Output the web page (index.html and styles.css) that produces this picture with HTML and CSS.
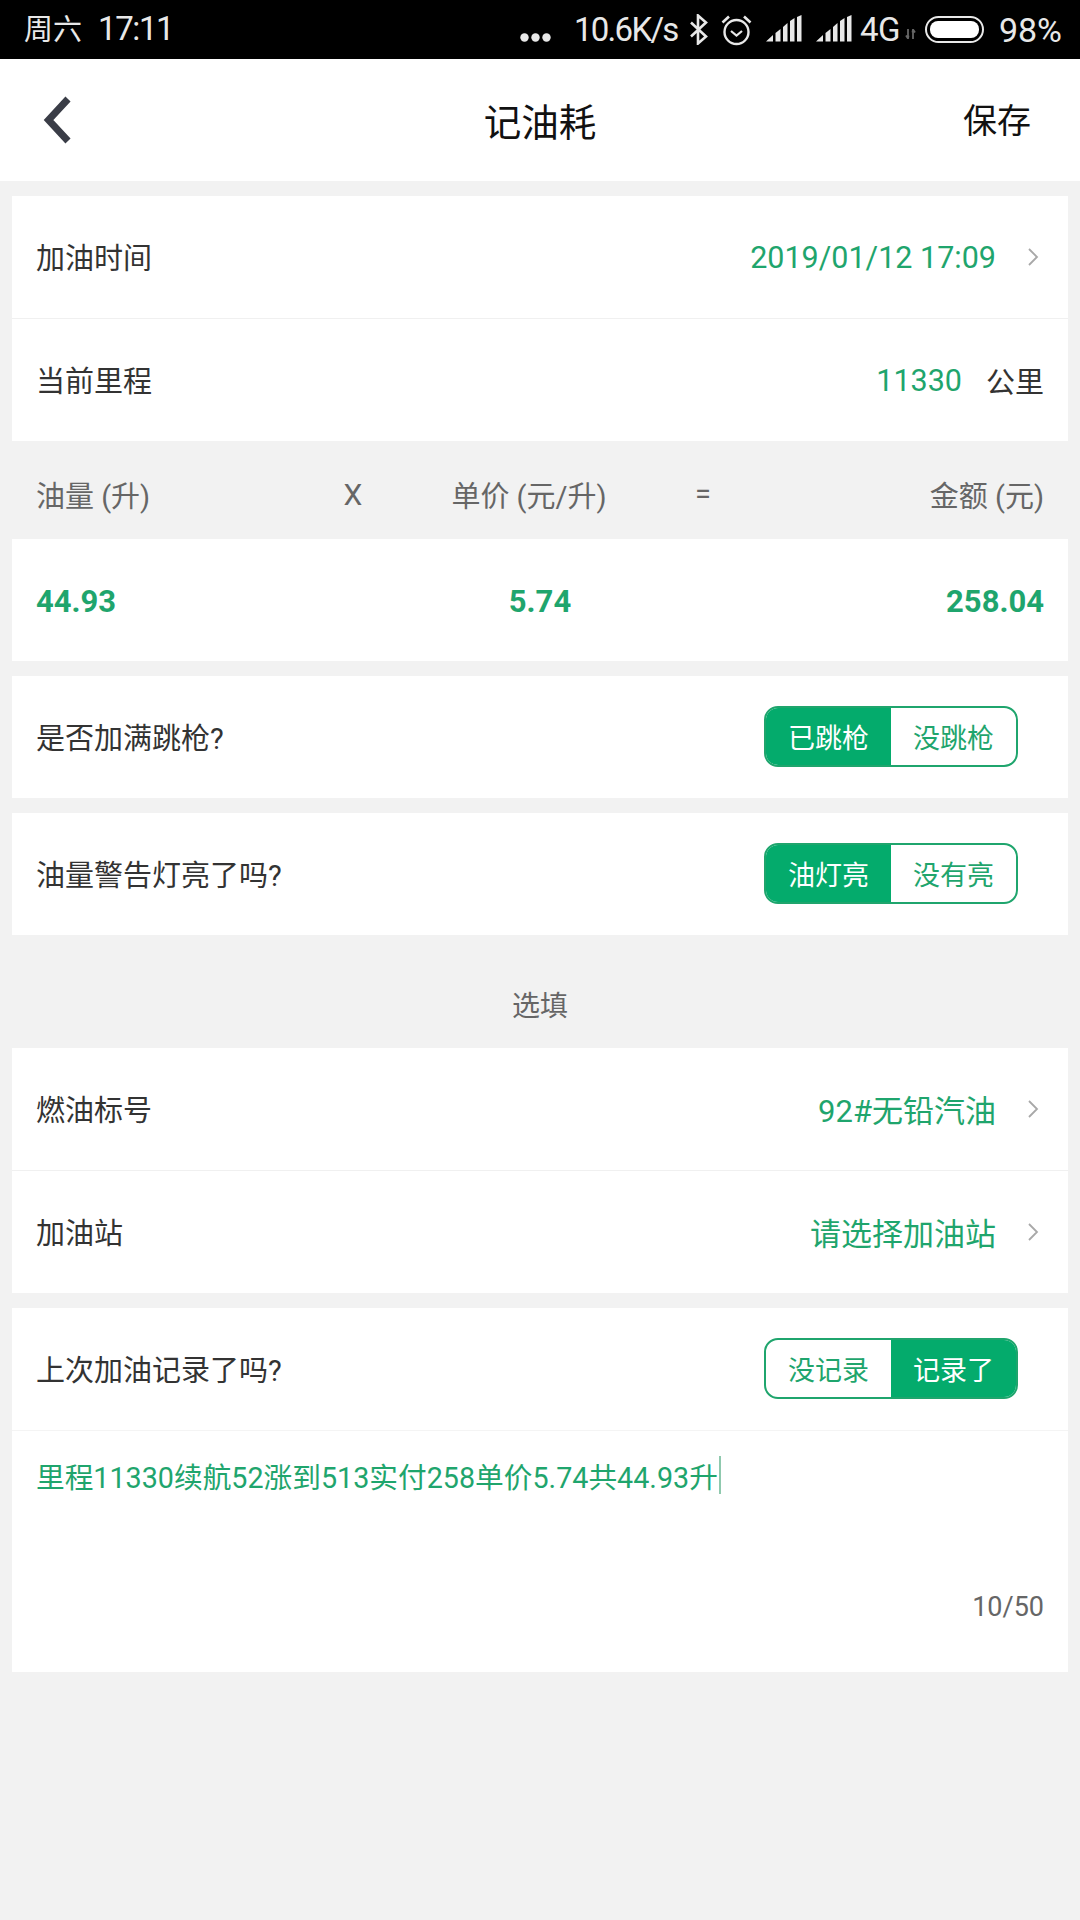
FILE: index.html
```html
<!DOCTYPE html>
<html lang="zh">
<head>
<meta charset="utf-8">
<title>记油耗</title>
<link rel="stylesheet" href="styles.css">
</head>
<body>
<div class="status">
  <div class="st-left"><span class="st-day">周六</span><span class="st-time">17:11</span></div>
  <div class="st-right">
    <svg class="i-dots" width="31" height="9" viewBox="0 0 31 9"><circle cx="4.500" cy="4.500" r="4.200"/><circle cx="15.500" cy="4.500" r="4.200"/><circle cx="26.500" cy="4.500" r="4.200"/></svg>
    <span class="st-speed">10.6K/s</span>
    <svg class="i-bt" width="19" height="31" viewBox="0 0 19 31"><path d="M2 8.500l15 14-8 7V1.500l8 7-15 14" fill="none" stroke="#e8e8e8" stroke-width="2.600"/></svg>
    <svg class="i-alarm" width="31" height="32" viewBox="0 0 31 32"><circle cx="15.500" cy="18" r="12" fill="none" stroke="#e8e8e8" stroke-width="2.400"/><path d="M10 17l5.500 4.500L21 17" fill="none" stroke="#e8e8e8" stroke-width="2.200"/><path d="M1.500 8.500 8 2.500M29.500 8.500 23 2.500" fill="none" stroke="#e8e8e8" stroke-width="2.600"/></svg>
    <svg class="i-sig" width="36" height="27" viewBox="0 0 36 27"><path d="M0 26.500 7 20v6.500zM9.500 18l5-4v12.500h-5zM17 12l4.500-4v18.500H17zM24 6l4.500-3v23.500H24zM31 2l4.500-2v26.500H31z" fill="#e8e8e8"/></svg>
    <svg class="i-sig i-sig2" width="36" height="27" viewBox="0 0 36 27"><path d="M0 26.500 7 20v6.500zM9.500 18l5-4v12.500h-5zM17 12l4.500-4v18.500H17zM24 6l4.500-3v23.500H24zM31 2l4.500-2v26.500H31z" fill="#e8e8e8"/></svg>
    <span class="st-4g">4G</span>
    <svg class="i-arrows" width="11" height="10" viewBox="0 0 11 10"><path d="M3 0v9M1 6.500 3 9.500 3.500 6.500M8 10V1M7.500 3.500 8 .5 10 3.500" fill="none" stroke="#666" stroke-width="1.800"/></svg>
    <div class="battery"><div class="battery-fill"></div></div>
    <span class="st-pct">98%</span>
  </div>
</div>

<header class="nav">
  <svg class="back" width="30" height="48" viewBox="0 0 30 48"><path d="M26 3 6.500 24 26 45" fill="none" stroke="#3a3d47" stroke-width="7"/></svg>
  <h1 class="nav-title">记油耗</h1>
  <span class="nav-save">保存</span>
</header>

<main class="page">
  <section class="card">
    <div class="row line">
      <span class="label">加油时间</span>
      <div class="value"><span class="green">2019/01/12 17:09</span>
        <svg class="chev" width="12" height="20" viewBox="0 0 12 20"><path d="M2 2l8 8-8 8" fill="none" stroke="#a8a8a8" stroke-width="1.800"/></svg></div>
    </div>
    <div class="row">
      <span class="label">当前里程</span>
      <div class="value"><span class="green">11330</span><span class="unit">公里</span></div>
    </div>
  </section>

  <div class="calc-head">
    <span>油量 (升)</span><span class="c-mid c-x">X</span><span class="c-mid">单价 (元/升)</span><span class="c-mid">=</span><span class="c-end">金额 (元)</span>
  </div>
  <section class="card calc">
    <span class="num">44.93</span><span class="num mid">5.74</span><span class="num">258.04</span>
  </section>

  <section class="card gap">
    <div class="row">
      <span class="label">是否加满跳枪?</span>
      <div class="seg"><span class="on">已跳枪</span><span>没跳枪</span></div>
    </div>
  </section>
  <section class="card gap">
    <div class="row">
      <span class="label">油量警告灯亮了吗?</span>
      <div class="seg"><span class="on">油灯亮</span><span>没有亮</span></div>
    </div>
  </section>

  <div class="optional">选填</div>

  <section class="card">
    <div class="row line">
      <span class="label">燃油标号</span>
      <div class="value"><span class="green cn">92#无铅汽油</span>
        <svg class="chev" width="12" height="20" viewBox="0 0 12 20"><path d="M2 2l8 8-8 8" fill="none" stroke="#a8a8a8" stroke-width="1.800"/></svg></div>
    </div>
    <div class="row">
      <span class="label">加油站</span>
      <div class="value"><span class="green cn">请选择加油站</span>
        <svg class="chev" width="12" height="20" viewBox="0 0 12 20"><path d="M2 2l8 8-8 8" fill="none" stroke="#a8a8a8" stroke-width="1.800"/></svg></div>
    </div>
  </section>

  <section class="card gap">
    <div class="row">
      <span class="label">上次加油记录了吗?</span>
      <div class="seg"><span>没记录</span><span class="on">记录了</span></div>
    </div>
    <div class="note">
      <div class="note-text"><span>里程11330续航52涨到513实付258单价5.74共44.93升</span><i class="caret"></i></div>
      <div class="note-count">10/50</div>
    </div>
  </section>
</main>
</body>
</html>
```

FILE: styles.css
```css
* { box-sizing: border-box; }
html, body { margin: 0; padding: 0; }
body {
  width: 1080px;
  height: 1920px;
  overflow: hidden;
  background: #f2f2f2;
  font-family: Roboto, "Noto Sans CJK SC", sans-serif;
  color: #333;
}
.status {
  height: 59px;
  background: #000;
  color: #e8e8e8;
  display: flex;
  align-items: center;
  justify-content: space-between;
  padding: 0 18px 0 24px;
  font-size: 33px;
  line-height: 40px;
}
.st-left { display: flex; align-items: baseline; gap: 16px; }
.st-day { font-size: 29px; }
.st-time { letter-spacing: -1.400px; }
.st-right { display: flex; align-items: center; }
.i-dots { fill: #e8e8e8; margin-right: 23px; margin-top: 16px; }
.st-speed { width: 105px; margin-right: 10px; letter-spacing: -1.700px; white-space: nowrap; }
.i-bt { margin-right: 13px; }
.i-alarm { margin-right: 14px; }
.i-sig { margin-right: 14px; margin-top: -3px; }
.i-sig2 { margin-right: 8px; }
.st-4g { width: 41px; letter-spacing: -0.500px; white-space: nowrap; }
.i-arrows { margin: 8px 9px 0 4px; }
.battery {
  width: 59px;
  height: 27px;
  border: 2.500px solid #e8e8e8;
  border-radius: 14px;
  padding: 3px;
  margin-right: 15px;
}
.battery-fill { height: 100%; background: #fff; border-radius: 8px; }
.st-pct { font-size: 34px; white-space: nowrap; }

.nav {
  height: 122px;
  background: #fff;
  display: flex;
  align-items: center;
  justify-content: space-between;
  padding: 0 49px 0 42px;
  position: relative;
}
.nav-title {
  position: absolute;
  left: 0;
  right: 0;
  margin: -2px 0 0;
  text-align: center;
  font-size: 37.500px;
  font-weight: 400;
  color: #111;
}
.nav-save { font-size: 34px; color: #111; margin-top: -3px; }

.page { padding: 15px 12px 0; }
.card { background: #fff; }
.gap { margin-top: 15px; }
.row {
  height: 122px;
  padding: 0 24px;
  display: flex;
  align-items: center;
  justify-content: space-between;
}
.row.line { height: 123px; border-bottom: 1px solid #f0f0f0; }
.label { font-size: 29px; color: #333; margin-top: -2px; }
.value { display: flex; align-items: center; font-size: 30.500px; }
.green { color: #1fa56d; }
.cn { font-size: 31px; margin-top: -2px; }
.chev { margin-left: 31px; margin-right: 5px; }
.unit { margin-left: 24px; font-size: 29px; color: #333; }

.calc-head {
  height: 98px;
  padding: 8px 24px 0;
  display: grid;
  grid-template-columns: 269px 96px 256px 92px 295px;
  align-items: center;
  font-size: 29px;
  color: #666;
}
.c-mid { justify-self: center; white-space: nowrap; }
.c-x { font-size: 30px; }
.c-end { justify-self: end; white-space: nowrap; }

.calc {
  height: 122px;
  padding: 2px 24px 0;
  display: grid;
  grid-template-columns: 1fr 1fr 1fr;
  align-items: center;
}
.num { font-size: 31px; font-weight: 700; color: #1fa56d; }
.num:last-child { justify-self: end; }
.num.mid { justify-self: center; }

.seg {
  display: flex;
  width: 254px;
  height: 61px;
  margin: -2px 26px 0 0;
  border: 2px solid #1fa56d;
  border-radius: 14px;
  overflow: hidden;
  font-size: 27px;
  color: #1fa56d;
}
.seg span { flex: 1; display: flex; align-items: center; justify-content: center; }
.seg .on { background: #04ab6c; color: #fff; }

.optional {
  height: 113px;
  padding-top: 24px;
  display: flex;
  align-items: center;
  justify-content: center;
  font-size: 28px;
  color: #666;
}

.note {
  height: 242px;
  padding: 21px 24px 0;
  border-top: 1px solid #f4f4f4;
  display: flex;
  flex-direction: column;
}
.note-text { display: flex; align-items: center; font-size: 28.700px; color: #1fa56d; height: 46px; white-space: nowrap; }
.caret { display: inline-block; width: 2px; height: 38px; background: #8fc9ae; margin-left: 1px; }
.note-count { margin-top: 93px; align-self: flex-end; font-size: 27px; color: #666; }
```
